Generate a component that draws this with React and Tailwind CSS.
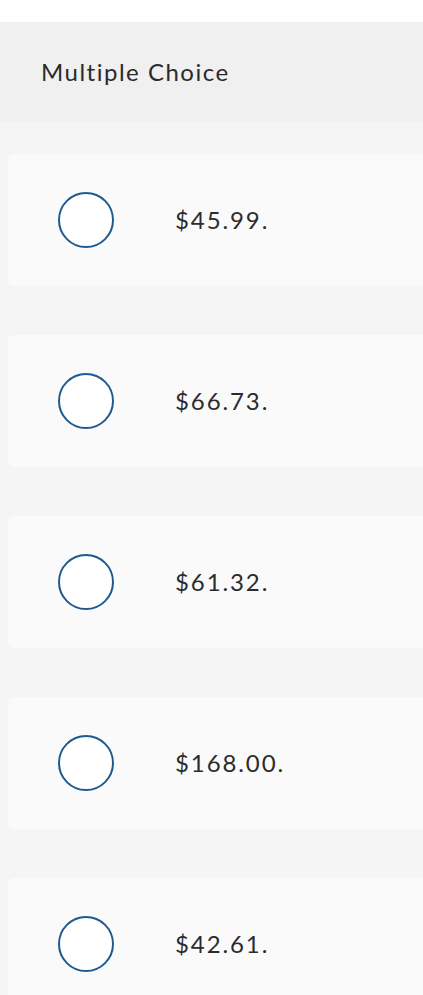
import { useState } from "react";

const choices = ["$45.99.", "$66.73.", "$61.32.", "$168.00.", "$42.61."];

function RadioCircle({ checked }) {
  return (
    <span className="flex h-[56px] w-[56px] shrink-0 items-center justify-center rounded-full border-2 border-[#1f5a8e] bg-white">
      {checked && <span className="h-[28px] w-[28px] rounded-full bg-[#1f5a8e]" />}
    </span>
  );
}

export default function App() {
  const [selected, setSelected] = useState(null);

  return (
    <div
      className="min-h-[995px] w-[423px] overflow-hidden bg-white text-[#2b2b2b]"
      style={{ fontFamily: "Lato, 'Open Sans', sans-serif" }}
    >
      <div className="h-[22px] bg-white" />
      <div className="flex h-[100px] items-center bg-[#f0f0f0] pl-[41px]">
        <h2 className="text-[24px] leading-none tracking-[1.5px]">Multiple Choice</h2>
      </div>

      <div className="flex flex-col gap-[49px] bg-[#f5f5f5] pl-2 pt-8 pb-10">
        {choices.map((choice, i) => (
          <button
            key={choice}
            type="button"
            onClick={() => setSelected(i)}
            className="flex h-[132px] items-center rounded-l-md bg-[#fafafa] pl-[50px] text-left"
          >
            <RadioCircle checked={selected === i} />
            <span className="ml-[61px] text-[24px] leading-none tracking-[1.9px]">{choice}</span>
          </button>
        ))}
      </div>
    </div>
  );
}
